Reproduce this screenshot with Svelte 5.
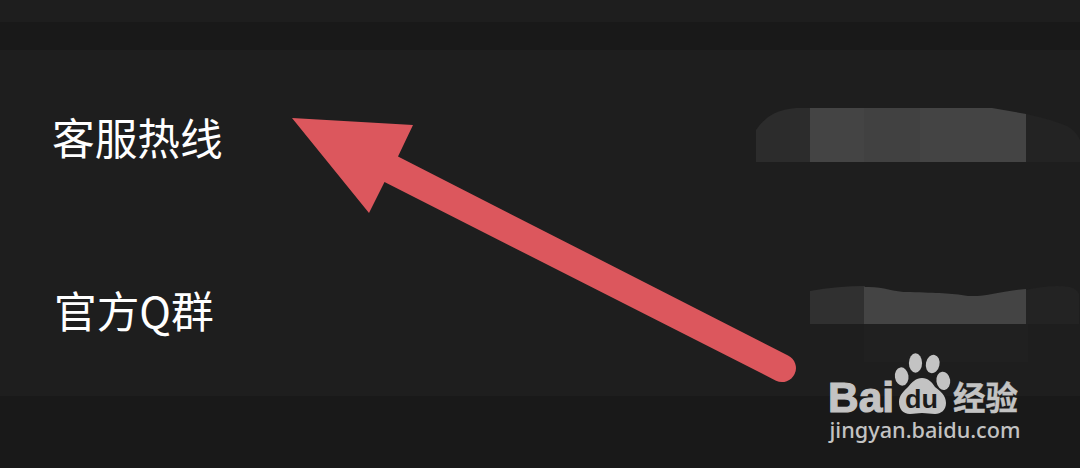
<script lang="ts">
	type Row = { label: string; kind: 'hotline' | 'group' };

	const rows: Row[] = [
		{ label: '客服热线', kind: 'hotline' },
		{ label: '官方Q群', kind: 'group' }
	];
</script>

<main class="page">
	<div class="previous"></div>
	<div class="divider"></div>

	<section class="contacts">
		{#each rows as row}
			<div class="row {row.kind}">
				<span class="label">{row.label}</span>
				{#if row.kind == 'hotline'}
					<svg class="mask" width="324" height="60" viewBox="756 105 324 60" aria-hidden="true">
						<path fill="#2c2c2c" d="M756 162V130Q764 118 775 113Q784 109 796 108H811V162Z" />
						<path fill="#232323" d="M1026 162V114Q1050 119 1067 126Q1076 131 1080 140V162Z" />
						<path fill="#444" d="M810 162V108H992L1026 114V162Z" />
						<path fill="#414141" d="M864 108H920V162H864Z" />
					</svg>
				{:else}
					<svg class="mask" width="270" height="98" viewBox="810 264 270 98" aria-hidden="true">
						<path fill="#202020" d="M864 324H1028V370H864Z" />
						<path fill="#303030" d="M810 324V291Q838 286 865 286V324Z" />
						<path fill="#232323" d="M1026 324V290Q1052 284 1070 287Q1077 289 1079 294V324Z" />
						<path fill="#444" d="M864 324V287C884 286 890 292 910 292C938 293 950 293 968 296C987 297 1000 291 1026 289V324Z" />
					</svg>
				{/if}
			</div>
		{/each}
	</section>

	<svg class="arrow" viewBox="0 0 1080 468" aria-hidden="true">
		<path fill="#dc575d" d="M292 118L413 125L398 156.500L788 355.500A13.700 13.700 0 0 1 776 380.700L384.500 182L369 213Z" />
	</svg>

	<svg class="watermark" width="230" height="110" viewBox="810 340 230 110">
		<g fill="#c3c3c3">
			<text class="bai" x="828" y="411.500" textLength="66" lengthAdjust="spacingAndGlyphs">Bai</text>
			<ellipse cx="901.700" cy="376.500" rx="6.800" ry="9.200" transform="rotate(-8 901.700 376.500)" />
			<ellipse cx="915.500" cy="363" rx="6.600" ry="9.700" />
			<ellipse cx="932.700" cy="364" rx="6.800" ry="9.300" transform="rotate(12 932.700 364)" />
			<ellipse cx="943.300" cy="380.800" rx="6.900" ry="9.200" transform="rotate(-8 943.300 380.800)" />
			<path d="M922 378C928 378 932 382 935 387C940 391 946 395 946 403C946 410 941 414 935 414C930 414 927 413 922 413C917 413 915 414 910 414C903 414 899 409 899 402C899 395 904 391 908 387C912 382 916 378 922 378Z" />
			<text class="jingyan" x="953" y="409.500" textLength="65" lengthAdjust="spacingAndGlyphs">经验</text>
			<text class="url" x="829.500" y="438" textLength="191" lengthAdjust="spacingAndGlyphs">jingyan.baidu.com</text>
		</g>
		<text class="du" x="905" y="407.500" textLength="33" lengthAdjust="spacingAndGlyphs">du</text>
	</svg>
</main>

<style>
:global(body) {
	background: #191919;
}

.page {
	position: relative;
	height: 468px;
	overflow: hidden;
	background: #191919;
	font-family: "Noto Sans CJK SC", sans-serif;
}

.previous {
	height: 22px;
	background: #1e1e1e;
}

.divider {
	height: 28px;
}

.contacts {
	box-sizing: border-box;
	height: 346px;
	padding-left: 52px;
	background: #1e1e1e;
}

.row {
	display: flex;
	align-items: center;
	justify-content: space-between;
}

.hotline {
	height: 170px;
}

.group {
	height: 186px;
}

.label {
	color: #fff;
	font-size: 42.7px;
	line-height: 60px;
}

.hotline .label {
	padding-top: 2px;
}

.group .label {
	padding-bottom: 8px;
	padding-left: 2px;
}

.mask {
	flex: none;
}

.arrow {
	position: absolute;
	inset: 0;
	width: 1080px;
	height: 468px;
}

.watermark {
	position: absolute;
	top: 340px;
	left: 810px;
}

.bai {
	font: bold 42px "Liberation Sans", sans-serif;
	stroke: #c3c3c3;
	stroke-width: 1.2px;
}

.du {
	fill: #1b1b1b;
	font: bold 25px "Liberation Sans", sans-serif;
}

.jingyan {
	font: bold 33px "Noto Sans CJK SC", sans-serif;
	stroke: #c3c3c3;
	stroke-width: .4px;
}

.url {
	font: 500 22px "Noto Sans", sans-serif;
}
</style>
